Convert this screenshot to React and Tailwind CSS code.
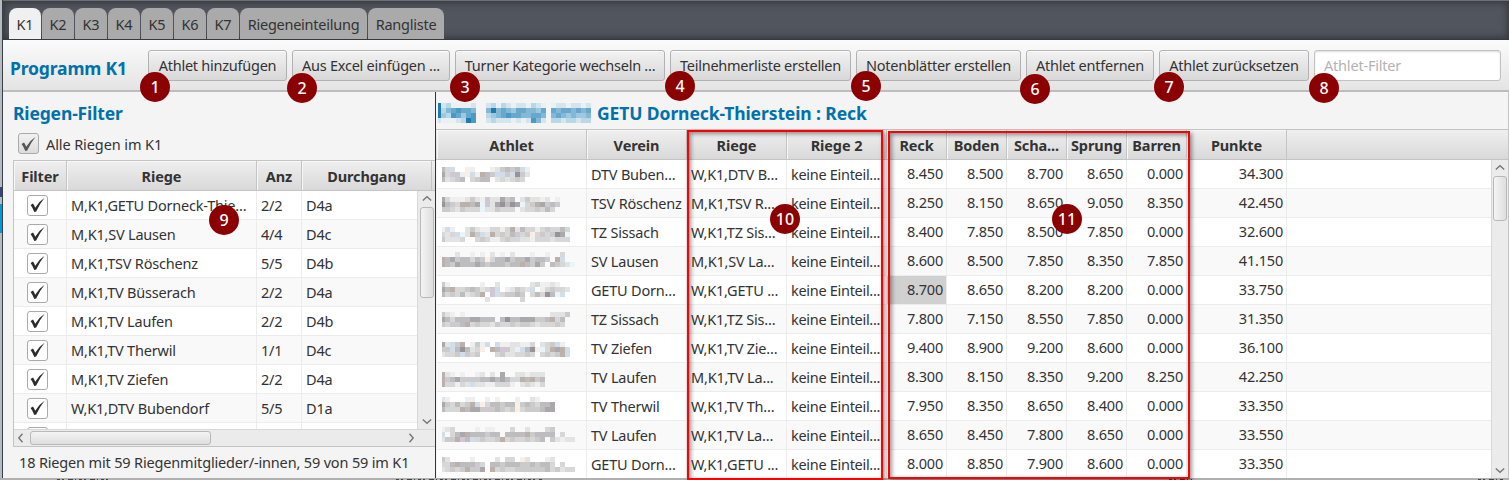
import React from "react";

const TABS = [
  ["K1", "w-[32px] bg-[#f0f0f0] mr-px"], ["K2", "w-[32px] bg-[#aaaaaa] mr-px"], ["K3", "w-[32px] bg-[#aaaaaa] mr-px"],
  ["K4", "w-[32px] bg-[#aaaaaa] mr-px"], ["K5", "w-[32px] bg-[#aaaaaa] mr-px"], ["K6", "w-[32px] bg-[#aaaaaa] mr-px"],
  ["K7", "w-[32px] bg-[#aaaaaa] mr-px"], ["Riegeneinteilung", "w-[127px] bg-[#aaaaaa] mr-px"], ["Rangliste", "w-[76px] bg-[#aaaaaa]"],
];

const BUTTONS = [
  ["Athlet hinzufügen", "w-[139px]"], ["Aus Excel einfügen ...", "w-[158px]"], ["Turner Kategorie wechseln ...", "w-[210px]"],
  ["Teilnehmerliste erstellen", "w-[181px]"], ["Notenblätter erstellen", "w-[165px]"], ["Athlet entfernen", "w-[128px]"],
  ["Athlet zurücksetzen", "w-[150px]"],
];

const GROUPS = [
  ["M,K1,GETU Dorneck-Thie...", "2/2", "D4a"], ["M,K1,SV Lausen", "4/4", "D4c"], ["M,K1,TSV Röschenz", "5/5", "D4b"],
  ["M,K1,TV Büsserach", "2/2", "D4a"], ["M,K1,TV Laufen", "2/2", "D4b"], ["M,K1,TV Therwil", "1/1", "D4c"],
  ["M,K1,TV Ziefen", "2/2", "D4a"], ["W,K1,DTV Bubendorf", "5/5", "D1a"], ["", "", ""],
];

const ATHLETES = [
  ["DTV Buben...", "W,K1,DTV B...", "8.450", "8.500", "8.700", "8.650", "0.000", "34.300"],
  ["TSV Röschenz", "M,K1,TSV R...", "8.250", "8.150", "8.650", "9.050", "8.350", "42.450"],
  ["TZ Sissach", "W,K1,TZ Sis...", "8.400", "7.850", "8.500", "7.850", "0.000", "32.600"],
  ["SV Lausen", "M,K1,SV La...", "8.600", "8.500", "7.850", "8.350", "7.850", "41.150"],
  ["GETU Dorn...", "W,K1,GETU ...", "8.700", "8.650", "8.200", "8.200", "0.000", "33.750"],
  ["TZ Sissach", "W,K1,TZ Sis...", "7.800", "7.150", "8.550", "7.850", "0.000", "31.350"],
  ["TV Ziefen", "W,K1,TV Zie...", "9.400", "8.900", "9.200", "8.600", "0.000", "36.100"],
  ["TV Laufen", "M,K1,TV La...", "8.300", "8.150", "8.350", "9.200", "8.250", "42.250"],
  ["TV Therwil", "W,K1,TV Th...", "7.950", "8.350", "8.650", "8.400", "0.000", "33.350"],
  ["TV Laufen", "W,K1,TV La...", "8.650", "8.450", "7.800", "8.650", "0.000", "33.550"],
  ["GETU Dorn...", "W,K1,GETU ...", "8.000", "8.850", "7.900", "8.600", "0.000", "33.350"],
];

// Mosaic cells: a digit is the darkness of one block, a letter a tinted block, a dot is empty.
const MOSAICS = [
  ["53b..o1...124545b1", "63p41ob1t54bb4b742", "52345.3455.232343."],
  ["631112421p22645.242212.1", "7543tt56cp267576c34t6454", "44324333c224333.2334353."],
  ["1b1..242113313t25331343353", "323bc2t4b2t3435p34o343476c", "42223..3431134332213332333"],
  ["...2..1.1.2.1.2...1..1..3", "t56455354o355645564554.tb", "t546555654555455t5464.5432c"],
  ["41......1..2......231121.", "65t3345423pb.12432b.134332", "53435234t.pb34454.35375cb", ".........2......3........"],
  ["421.1.................2224", "65355566555.5755666445t35", "43445t3433243343443233343"],
  ["62b4t.141b.b1122113.234b1", "44b57523o.t5p421b57oc3t6tb", "2334b434...34223343.3434tb"],
  ["t21.1..12.2.6..221222", "t4564p4455656533t5t45", "t33132b22113331.23213"],
  ["21...11..1.o...1..21..", "643534tbo355455o4543556", "5333t5664p45434o3444566"],
  ["123....1.11...3..2...34", "b.356t555455.5555t45555.3", "244tp5b34334t34334345.42122"],
  ["42....1....2.33.o2...12", "335t555p3.5545554454553.3", "23434t446.t3433444444534233"],
];
const OFFSETS = ["mt-[7px]", "mt-[8px]", "mt-[9px]", "mt-[5px]", "mt-[6px]", "mt-[7px]", "mt-[8px]", "mt-[9px]", "mt-[5px]", "mt-[6px]", "mt-[7px]"];
const TINTS = { b: "#cfdeea", p: "#cfc6d6", o: "#fbeee4", t: "#bdb0a8", c: "#e8f5fb" };
const GREYS = { ...TINTS, 0: "#fafafa", 1: "#efeff0", 2: "#e2e3e3", 3: "#d7d7d8", 4: "#cbcbcc", 5: "#bdbdbf", 6: "#aaa8aa", 7: "#96939a" };
const BLUES = { 0: "#e9f1f5", 1: "#d5e5ee", 2: "#b9d8e7", 3: "#9dc9e0", 4: "#83b9d7", 5: "#66a9cd", 6: "#4b9ac6", 7: "#1c7bb0" };
const TITLE_BLOCKS = [
  "71200001..120210110210.01101101",
  "72456554..474543554435.54554545",
  "73265356..234565544554.45434334",
  "10001276..121110101641.22122122",
];

function Mosaic({ rows, colors, className }) {
  return (
    <svg className={className} width="158" height={rows.length * 5} shapeRendering="crispEdges">
      {rows.map((row, y) => [...row].map((c, x) => c === "." ? null : <rect key={x + "-" + y} x={Math.max(0, x * 5 - 2)} y={y * 5} width={x ? 5 : 3} height="5" fill={colors[c]} />))}
    </svg>
  );
}

function Check({ muted, className }) {
  return (
    <span className={"flex h-[21px] w-[21px] shrink-0 items-center justify-center rounded-[3px] border border-[#aaaaaa] " + (muted ? "bg-linear-to-b from-[#f2f2f2] to-[#dcdcdc] " : "bg-white ") + className}>
      <svg width="15" height="16" viewBox="0 0 15 16" fill={muted ? "#555" : "#2c2c2c"}><path d="M0.6 8 3 6.6Q4.3 8.3 5.2 10.8 8.8 4.6 14.6 0.8 9.6 7 6.2 14.6L4.3 15Q2.8 11 0.6 8Z" /></svg>
    </span>
  );
}

function Arrow({ d, className }) {
  return <svg className={className} width="10" height="10" viewBox="0 0 10 10" fill="none" stroke="#777" strokeWidth="1.4"><path d={d} /></svg>;
}

const HEAD = "bg-linear-to-b from-[#efefef] to-[#d9d9d9] border-[#c4c4c4]";
const TH = "h-full shrink-0 border-r border-[#c4c4c4] flex items-center justify-center tracking-[-0.1px] shadow-[inset_1px_1px_0_#f7f7f7] ";
const TD = "h-full shrink-0 border-r border-[#ececec] flex items-center whitespace-nowrap overflow-hidden ";

const RIGHT_HEAD = [
  ["Athlet", "w-[150px]"], ["Verein", "w-[100px]"], ["Riege", "w-[100px]"], ["Riege 2", "w-[100px]"], ["Reck", "w-[60px]"],
  ["Boden", "w-[60px]"], ["Scha...", "w-[60px]"], ["Sprung", "w-[60px]"], ["Barren", "w-[60px]"], ["Punkte", "w-[100px]"],
];

const MARKS = [
  ["1", "left-[140px] top-[72px]"], ["2", "left-[287px] top-[73px]"], ["3", "left-[450px] top-[72px]"], ["4", "left-[665px] top-[71px]"],
  ["5", "left-[851px] top-[71px]"], ["6", "left-[1020px] top-[74px]"], ["7", "left-[1154px] top-[72px]"], ["8", "left-[1309px] top-[73px]"],
  ["9", "left-[209px] top-[205px]"], ["10", "left-[770px] top-[204px]"], ["11", "left-[1052px] top-[204px]"],
];

export default function App() {
  return (
    <div className="relative flex h-[480px] w-[1509px] flex-col overflow-hidden bg-[#f4f4f4] font-['Noto_Sans',sans-serif] text-[14.5px] leading-[20px] tracking-[-0.2px] text-[#333]">
      <div className="flex h-[478px]">
        <div className="flex w-[2px] shrink-0 flex-col bg-[#b3bcc2]">
          <div className="mt-[187px] h-[10px] bg-[#31477f]" />
          <div className="mt-[7px] h-[29px] bg-[#0099dc]" />
        </div>
        <div className="flex min-w-0 flex-1 flex-col border-l border-[#3a3f44]">
          <div className="flex h-[40px] shrink-0 items-end border-y border-t-[#6a7074] border-b-[#36393d] bg-[#51555e] pl-[6px] shadow-[inset_0_0_7px_2px_#36393d]">
            {TABS.map(([t, c]) => <div key={t} className={"flex h-[31px] items-center justify-center rounded-t-[8px] tracking-[-0.25px] " + c}>{t}</div>)}
          </div>
          <div className="flex h-[52px] shrink-0 items-start border-b-2 border-[#bdbdbd] bg-linear-to-b from-[#fbfbfb] to-[#e4e4e4] pt-[10px]">
            <div className="w-[145px] pt-[8px] pl-[7px] text-[17.5px] font-bold tracking-[-0.15px] whitespace-nowrap text-[#0071ab]">Programm K1</div>
            <div className="flex gap-[5px]">
              {BUTTONS.map(([t, c]) => <div key={t} className={"flex h-[31px] items-center justify-center rounded-[3px] border border-[#b2b2b2] bg-linear-to-b from-[#f2f2f2] to-[#d8d8d8] pb-px tracking-[-0.25px] whitespace-nowrap shadow-[inset_0_1px_0_#fff] " + c}>{t}</div>)}
              <div className="flex h-[31px] w-[187px] items-center rounded-[3px] border border-[#c2c2c2] bg-white pb-px pl-[9px] text-[#b3b3b3] shadow-[inset_0_1px_2px_#ddd]">Athlet-Filter</div>
            </div>
          </div>
          <div className="flex min-h-0 flex-1">
            <div className="flex w-[433px] shrink-0 flex-col border-r border-[#333] pl-[10px]">
              <div className="mt-[11px] h-[20px] text-[17.5px] font-bold tracking-[-0.15px] text-[#0071ab]">Riegen-Filter</div>
              <div className="mt-[10px] flex h-[21px] items-center gap-[7px] pl-[5px] tracking-[-0.1px]"><Check muted className="" />Alle Riegen im K1</div>
              <div className="mt-[6px] flex h-[287px] flex-col border border-r-0 border-[#c4c4c4] bg-white">
                <div className={"flex h-[30px] shrink-0 border-b font-bold " + HEAD}>
                  <div className={TH + "w-[53px]"}>Filter</div>
                  <div className={TH + "w-[190px]"}>Riege</div>
                  <div className={TH + "w-[45px]"}>Anz</div>
                  <div className={TH + "w-[130px]"}>Durchgang</div>
                </div>
                <div className="flex h-[238px] shrink-0">
                  <div className="h-full w-[403px] overflow-hidden">
                    {GROUPS.map((g, i) => (
                      <div key={i} className={"flex h-[29px] border-b border-[#ececec] " + (i % 2 ? "bg-[#f9f9f9]" : "bg-white")}>
                        <div className={TD + "w-[53px] pl-[13px]"}><Check className="" /></div>
                        <div className={TD + "w-[190px] pl-[4px]"}>{g[0]}</div>
                        <div className={TD + "w-[45px] pl-[4px]"}>{g[1]}</div>
                        <div className="flex items-center pl-[4px]">{g[2]}</div>
                      </div>
                    ))}
                  </div>
                  <div className="flex w-[18px] flex-col items-center border-l border-[#d8d8d8] bg-[#ebebeb]">
                    <Arrow className="mt-[3px] h-[10px]" d="M0.8 6.5 5 2.8 9.2 6.5" />
                    <div className="mt-[3px] h-[91px] w-[14px] rounded-[3px] border border-[#b8b8b8] bg-linear-to-r from-[#f4f4f4] to-[#dedede]" />
                    <Arrow className="mt-auto mb-[3px]" d="M0.8 3.5 5 7.2 9.2 3.5" />
                  </div>
                </div>
                <div className="flex h-[17px] items-center border-t border-[#d8d8d8] bg-[#ebebeb]">
                  <Arrow className="ml-[2px]" d="M6.5 0.8 2.8 5 6.5 9.2" />
                  <div className="ml-[4px] h-[14px] w-[181px] rounded-[3px] border border-[#b8b8b8] bg-linear-to-b from-[#f4f4f4] to-[#dedede]" />
                  <Arrow className="ml-[195px]" d="M3.5 0.8 7.2 5 3.5 9.2" />
                </div>
              </div>
              <div className="mt-[5px] pl-[6px] tracking-[-0.16px] whitespace-nowrap">18 Riegen mit 59 Riegenmitglieder/-innen, 59 von 59 im K1</div>
            </div>
            <div className="flex min-w-0 flex-1 flex-col border-r border-[#c4c4c4]">
              <div className="flex h-[37px] items-center pt-[4px] pl-[2px] text-[17.5px] font-bold text-[#0071ab]">
                <Mosaic className="" colors={BLUES} rows={TITLE_BLOCKS} />
                <span className="ml-px tracking-[-0.1px] whitespace-nowrap">GETU Dorneck-Thierstein : Reck</span>
              </div>
              <div className={"flex h-[31px] shrink-0 border-y pl-px font-bold " + HEAD}>
                {RIGHT_HEAD.map(([t, c]) => <div key={t} className={TH + c}>{t}</div>)}
              </div>
              <div className="flex min-h-0 flex-1">
                <div className="w-[1055px] overflow-hidden pl-px">
                  {ATHLETES.map((a, i) => (
                    <div key={i} className={"flex h-[29px] border-b border-[#ececec] " + (i % 2 ? "bg-[#f9f9f9]" : "bg-white")}>
                      <div className="flex w-[150px] shrink-0 items-start overflow-hidden border-r border-[#ececec] pl-[5px]"><Mosaic rows={MOSAICS[i]} colors={GREYS} className={"max-w-none " + OFFSETS[i]} /></div>
                      <div className={TD + "w-[100px] pb-px pl-[4px]"}>{a[0]}</div>
                      <div className={TD + "w-[100px] pb-px pl-[4px]"}>{a[1]}</div>
                      <div className={TD + "w-[100px] pb-px pl-[4px] tracking-[-0.3px]"}>keine Einteil...</div>
                      {a.slice(2, 7).map((v, j) => <div key={j} className={TD + "w-[60px] justify-end pr-[3px] pb-[2px] " + (i === 4 && j === 0 ? "bg-[#d0d0d0]" : "")}>{v}</div>)}
                      <div className={TD + "w-[100px] justify-end pr-[3px] pb-[2px]"}>{a[7]}</div>
                    </div>
                  ))}
                </div>
                <div className="flex flex-1 flex-col items-center border-l border-[#d8d8d8] bg-[#ebebeb]">
                  <Arrow className="mt-[3px]" d="M0.8 6.5 5 2.8 9.2 6.5" />
                  <div className="mt-[3px] h-[45px] w-[14px] rounded-[3px] border border-[#b8b8b8] bg-linear-to-r from-[#f4f4f4] to-[#dedede]" />
                  <Arrow className="mt-auto mb-[3px]" d="M0.8 3.5 5 7.2 9.2 3.5" />
                </div>
              </div>
            </div>
          </div>
        </div>
      </div>
      <svg className="block bg-[#b0b0b0]" width="1509" height="2" stroke="#444" strokeWidth="1">
        <path d="M57 1.5H112M396 1.5H542M1169 1.5H1192M1478 1.5H1504" strokeDasharray="3 2 2 4 5 2 1 3" />
      </svg>
      <div className="absolute top-[130px] left-[687px] h-[350px] w-[196px] border-2 border-[#ff0000] shadow-[2px_2px_4px_#0006,inset_2px_2px_4px_#0006]" />
      <div className="absolute top-[131px] left-[888px] h-[348px] w-[302px] border-2 border-[#ff0000] shadow-[2px_2px_4px_#0006,inset_2px_2px_4px_#0006]" />
      {MARKS.map(([n, c]) => <div key={n} className={"absolute flex h-[30px] w-[30px] items-center justify-center rounded-full bg-[#8b0000] pb-px text-[16px] font-medium tracking-normal text-white " + c}>{n}</div>)}
    </div>
  );
}
